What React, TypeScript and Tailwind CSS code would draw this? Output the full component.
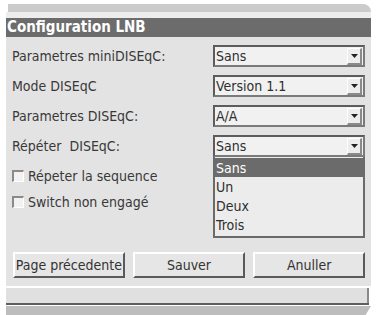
import React from "react";

const font = { fontFamily: '"DejaVu Sans Condensed", "Liberation Sans Narrow", "DejaVu Sans", sans-serif' };

function Arrow() {
  return (
    <div className="w-[15px] h-[17px] mr-[1px] bg-[#ededed] border-t border-l border-t-white border-l-white border-b-2 border-r-2 border-b-[#8a8a8a] border-r-[#8a8a8a] flex items-center justify-center">
      <svg width="7" height="4" viewBox="0 0 7 4"><polygon points="0,0 7,0 3.5,4" fill="#222" /></svg>
    </div>
  );
}

function Select({ value, open }: { value: string; open?: boolean }) {
  return (
    <div className="relative w-[152px] h-[22px]">
      <div className="w-full h-full bg-[#f1f1f1] border-2 border-[#5c5c5c] border-b-[#7a7a7a] border-r-[#7a7a7a] flex items-center justify-between pl-[1px]">
        <span className="text-[14px] leading-none text-[#2e2e2e]">{value}</span>
        <Arrow />
      </div>
      {open && (
        <div className="absolute left-0 top-[22px] w-full h-[81px] bg-[#ececec] border-2 border-t-0 border-[#6a6a6a] z-10 flex flex-col pt-[1px]">
          {["Sans", "Un", "Deux", "Trois"].map((o, i) => (
            <div
              key={o}
              className={
                "h-[19px] flex items-center pl-[1px] text-[14px] leading-none " +
                (i === 0 ? "bg-[#6b6b6b] text-white" : "text-[#2e2e2e]")
              }
            >
              {o}
            </div>
          ))}
        </div>
      )}
    </div>
  );
}

function Row({ label, value, open }: { label: string; value: string; open?: boolean }) {
  return (
    <div className="flex items-center justify-between h-[22px]">
      <span className="text-[14px] leading-none text-[#383838] whitespace-pre">{label}</span>
      <Select value={value} open={open} />
    </div>
  );
}

function Check({ label }: { label: string }) {
  return (
    <div className="flex items-center h-[14px] gap-[4px]">
      <div className="w-[12px] h-[12px] bg-[#f2f2f2] border-t-2 border-l-2 border-t-[#8a8a8a] border-l-[#8a8a8a] border-b border-r border-b-white border-r-white" />
      <span className="text-[14px] leading-none text-[#383838]">{label}</span>
    </div>
  );
}

function Button({ label, w }: { label: string; w: string }) {
  return (
    <div className={w + " h-[26px] bg-[#e6e6e6] border-t-2 border-l-2 border-t-white border-l-white border-b-2 border-r-2 border-b-[#5a5a5a] border-r-[#5a5a5a] flex items-center justify-center text-[14px] leading-none text-[#333] whitespace-nowrap"}>
      {label}
    </div>
  );
}

export default function App() {
  return (
    <div className="w-[376px] h-[315px] bg-white overflow-hidden pt-[4px] pl-[6px]" style={font}>
      <div className="w-[365px] flex flex-col">
        <div className="ml-[2px] h-[8px] bg-[#cbcbcb] rounded-tr-[9px]" />
        <div className="h-[6px] bg-[#ededed]" />
        <div className="h-[19px] bg-[#6c6c6c] flex items-center pl-[1px]">
          <span className="text-white font-bold text-[15px] leading-none">Configuration LNB</span>
        </div>
        <div className="bg-[#e3e3e3] h-[249px] pl-[6px] pr-[6px] pt-[8px] flex flex-col">
          <div className="flex flex-col gap-[8px]">
            <Row label="Parametres miniDISEqC:" value="Sans" />
            <Row label="Mode DISEqC" value="Version 1.1" />
            <Row label="Parametres DISEqC:" value="A/A" />
            <Row label="Répéter  DISEqC:" value="Sans" open />
          </div>
          <div className="flex flex-col gap-[12px] mt-[12px]">
            <Check label="Répeter la sequence" />
            <Check label="Switch non engagé" />
          </div>
          <div className="flex mt-[43px] gap-[8px] pl-[1px]">
            <Button label="Page précedente" w="w-[112px]" />
            <Button label="Sauver" w="w-[113px]" />
            <Button label="Anuller" w="w-[112px]" />
          </div>
        </div>
        <div className="h-[2px] bg-white" />
        <div className="h-[15px] bg-[#e0e0e0] border-r-2 border-[#8a8a8a] mr-[2px]" />
        <div className="h-[2px] bg-[#5e5e5e] mr-[2px]" />
        <div className="h-[10px] bg-[#bdbdbd] mt-[1px] [clip-path:polygon(0_0,100%_0,calc(100%-6px)_100%,0_100%)]" />
      </div>
    </div>
  );
}
